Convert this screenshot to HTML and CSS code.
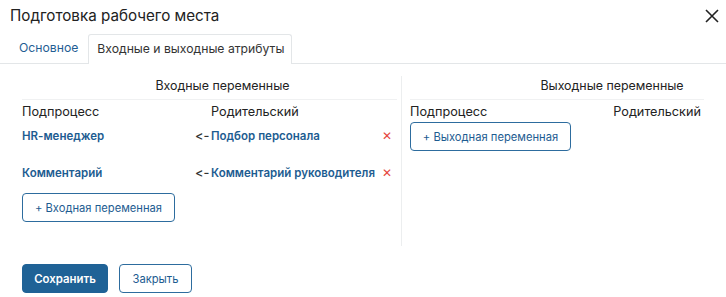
FILE: index.html
```html
<!DOCTYPE html>
<html lang="ru">
<head>
<meta charset="utf-8">
<link rel="stylesheet" href="styles.css">
</head>
<body>
<div class="dialog">
  <div class="head">
    <div class="title">Подготовка рабочего места</div>
    <svg class="close" width="14" height="14" viewBox="0 0 14 14"><path d="M1 1L13 13M13 1L1 13" stroke="#222" stroke-width="1.6" fill="none"/></svg>
  </div>
  <div class="tabs">
    <div class="tab">Основное</div>
    <div class="tab active">Входные и выходные атрибуты</div>
  </div>
  <div class="body">
    <div class="col left">
      <div class="sect">Входные переменные</div>
      <div class="grid">
        <div class="th">Подпроцесс</div><div></div><div class="th">Родительский</div><div></div>
        <div class="link r">HR-менеджер</div><div class="arrow r">&lt;-</div><div class="link r">Подбор персонала</div><div class="del r">✕</div>
        <div class="link r">Комментарий</div><div class="arrow r">&lt;-</div><div class="link r">Комментарий руководителя</div><div class="del r">✕</div>
      </div>
      <button class="btn out add">+ Входная переменная</button>
    </div>
    <div class="divider"></div>
    <div class="col right">
      <div class="sect">Выходные переменные</div>
      <div class="hrow"><div class="th">Подпроцесс</div><div class="th">Родительский</div></div>
      <button class="btn out add2">+ Выходная переменная</button>
    </div>
  </div>
  <div class="foot">
    <button class="btn primary">Сохранить</button>
    <button class="btn out close-btn">Закрыть</button>
  </div>
</div>
</body>
</html>
```
FILE: styles.css
```css
* { box-sizing: border-box; }
html, body { margin: 0; padding: 0; background: #fff; }
body { font-family: Inter, "Noto Sans", sans-serif; font-size: 12.7px; color: #222; width: 726px; height: 297px; overflow: hidden; font-feature-settings: "calt" 0, "liga" 0; font-variant-ligatures: none; }
.head { display: flex; justify-content: space-between; align-items: center; padding: 2px 7px 0 10px; height: 28px; }
.title { font-size: 15.2px; color: #222; }
.close { margin-top: 2px; }
.tabs { display: flex; align-items: flex-end; margin-top: 6px; padding-left: 8px; border-bottom: 1px solid #e3e6e8; height: 30px; }
.tab { padding: 0 10px 0 11px; height: 29px; line-height: 27px; color: #1f5e93; font-size: 12.2px; white-space: nowrap; }
.tab.active { color: #333; border: 1px solid #e3e6e8; border-bottom: none; border-radius: 3px 3px 0 0; background: #fff; margin-bottom: -1px; height: 30px; padding: 0 7px 0 8px; }
.body { display: flex; padding: 12px 0 0 22px; height: 182px; }
.col.left { width: 375px; }
.divider { width: 1px; background: #eceeef; margin: 0 8px 0 4px; }
.col.right { width: 294px; }
.sect { text-align: center; padding: 2px 0 6px 0; border-bottom: 1px solid #f0f1f2; height: 24px; line-height: 16px; font-size: 12.4px; white-space: nowrap; }
.left .sect { padding-left: 26px; }
.right .sect { padding-left: 110px; }
.grid { display: grid; grid-template-columns: 173px 16px 154px 27px; align-items: center; }
.th { height: 24px; line-height: 24px; white-space: nowrap; }
.r { height: 37px; line-height: 24px; white-space: nowrap; }
.link { color: #1d5c91; font-weight: 600; font-size: 11.5px; }
.arrow { color: #333; font-weight: 500; text-align: left; }
.del { color: #e5463b; font-size: 12px; text-align: right; }
.btn { font-family: inherit; font-size: 11.2px; height: 29px; border-radius: 4px; padding: 0; cursor: pointer; white-space: nowrap; font-feature-settings: "calt" 0; }
.btn.out { background: #fff; border: 1px solid #2d6c9e; color: #1d5c91; }
.add { width: 153px; margin-top: -5px; }
.hrow { display: flex; justify-content: space-between; padding-right: 3px; }
.add2 { width: 161px; margin-top: -2px; }
.foot { display: flex; gap: 11px; padding: 18px 0 0 22px; }
.btn.primary { background: #1f6296; border: 1px solid #1f6296; color: #fff; font-weight: 600; width: 86px; font-size: 11.4px; }
.close-btn { width: 73px; }
```
